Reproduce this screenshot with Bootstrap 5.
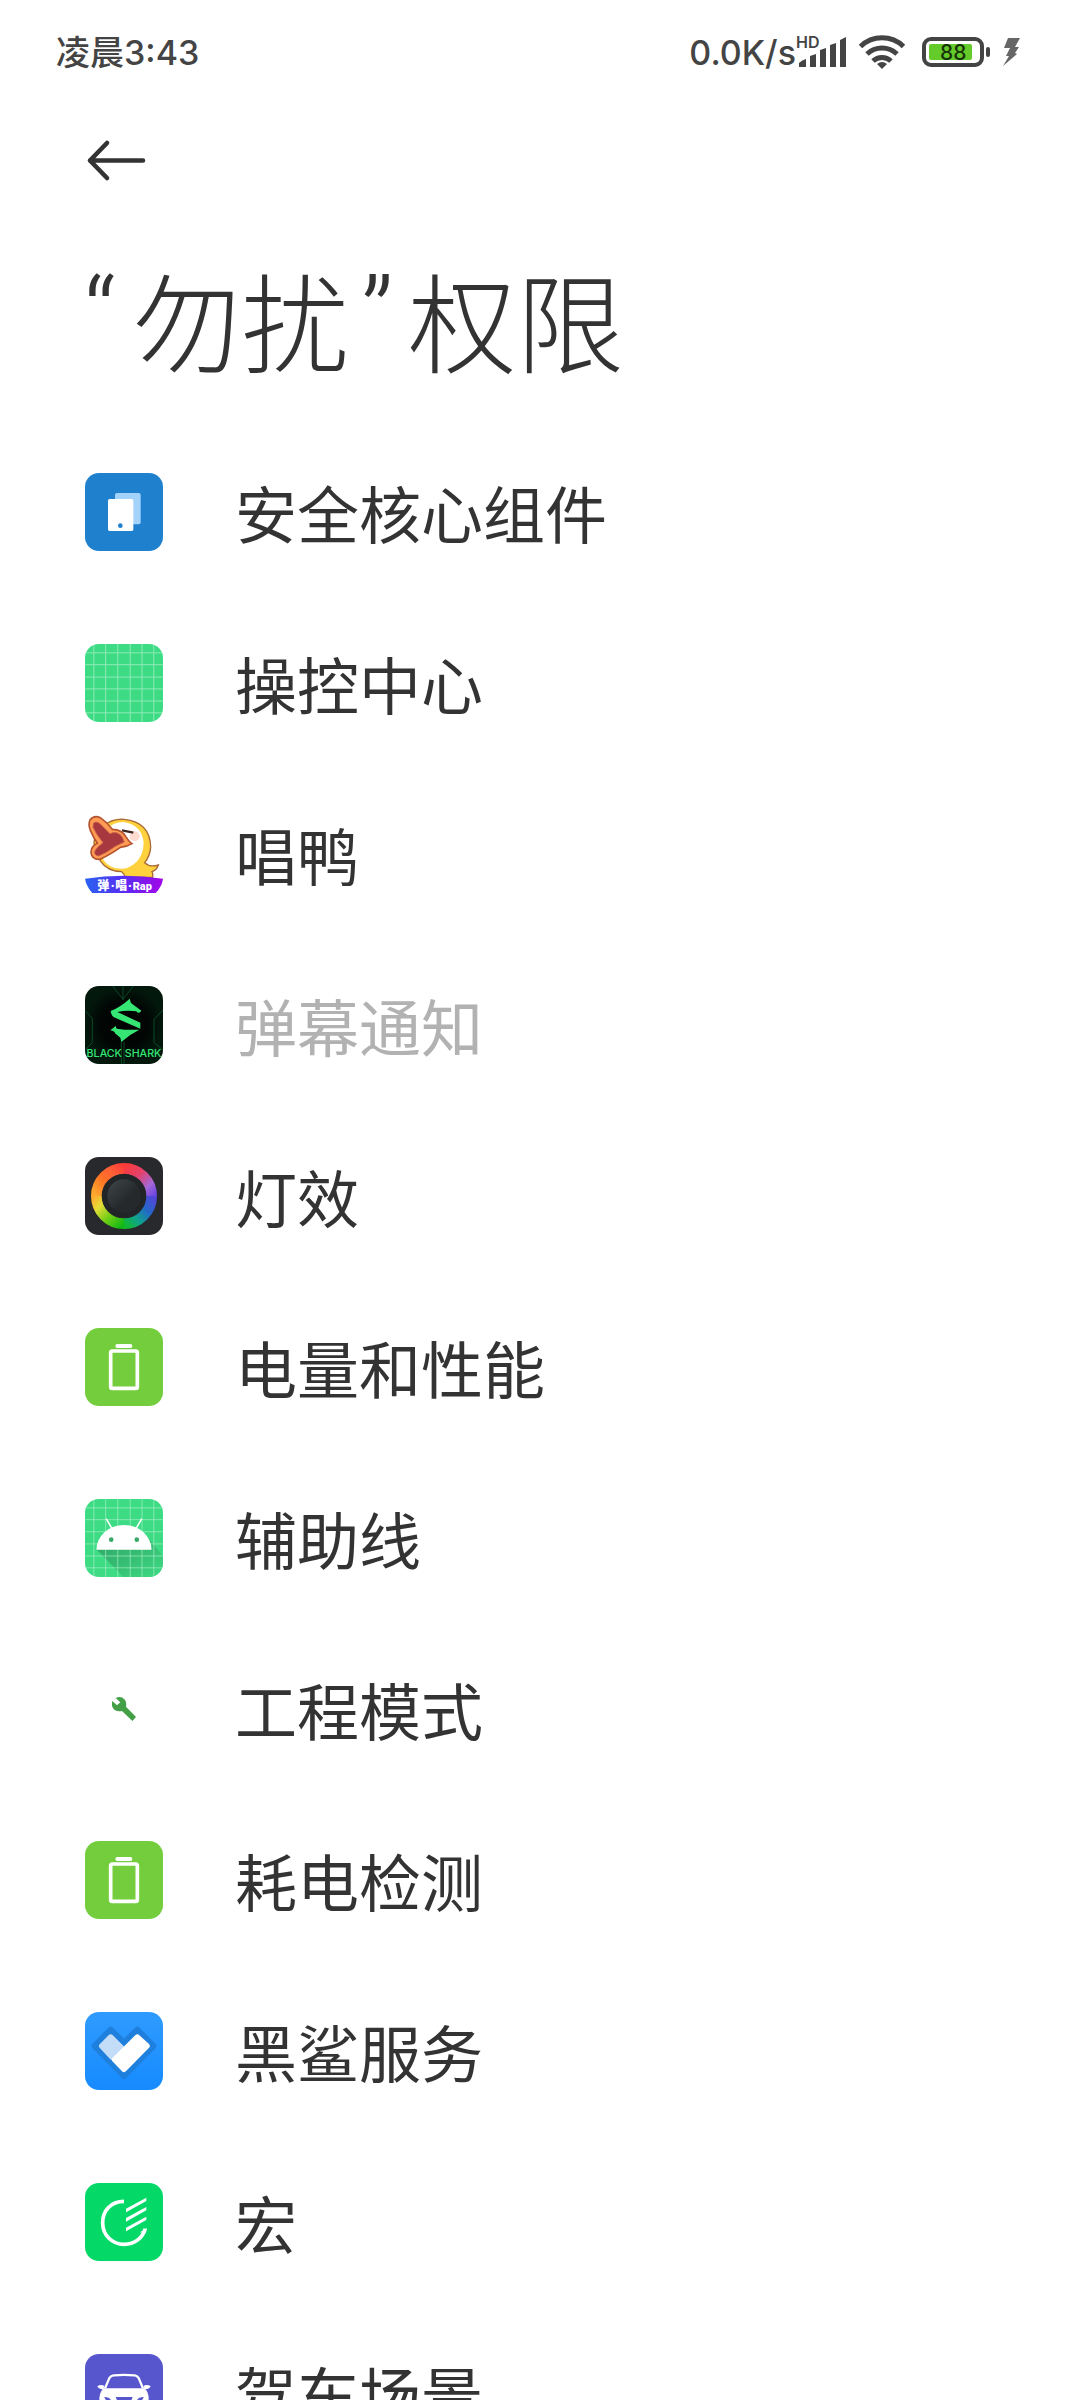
<!DOCTYPE html>
<html lang="zh-CN">
<head>
<meta charset="utf-8">
<meta name="viewport" content="width=device-width, initial-scale=1">
<title>“勿扰”权限</title>
<link href="https://cdn.jsdelivr.net/npm/bootstrap@5.3.0/dist/css/bootstrap.min.css" rel="stylesheet">
<style>
  body { background: #fff; color: #333; font-family: "Noto Sans CJK SC", sans-serif; }
  .screen { height: 100vh; }
  .status-bar { height: 104px; padding: 2px 58px 0 56px; color: #444; font-family: Inter, "Noto Sans CJK SC", sans-serif; font-size: 34px; line-height: 40px; font-weight: 500; }
  .status-bar svg { overflow: visible; margin-bottom: 2px; }
  .back-row { height: 112px; padding: 0 80px; }
  .back-btn { color: #333; }
  .page-title { height: 210px; padding: 0 80px; font-size: 108px; line-height: 204px; font-weight: 300; }
  .quote-mark { font-family: Roboto, sans-serif; font-weight: 300; }
  .quote-open { width: 53px; padding-left: 4px; }
  .quote-close { width: 59px; padding-left: 12px; }
  .app-item { height: 171px; padding: 0 85px; gap: 72px; color: #333; font-size: 62px; line-height: 80px; background: transparent; }
  .app-item.disabled { color: #b2b2b2; background: transparent; }
  .app-icon { width: 78px; height: 78px; border-radius: 14px; }
</style>
</head>
<body>
<div class="screen d-flex flex-column overflow-hidden">
  <header class="flex-shrink-0">
    <div class="status-bar d-flex align-items-center justify-content-between">
      <div>凌晨3:43</div>
      <div class="d-flex align-items-center">
        <span>0.0K/s</span>
        <svg width="54" height="36" viewBox="0 0 54 36" fill="#444" role="img" aria-label="信号">
          <text x="0" y="14" font-family="Inter" font-size="16" font-weight="600">HD</text>
          <path d="M3 33v-4q3-3 7-4v8zM14 33V22l6-2v13zM24 33V16l6-2v19zM34 33V11l6-2v24zM44 33V6l6-3v30z"/>
        </svg>
        <svg class="ms-2" width="48" height="36" viewBox="0 0 48 36" fill="none" stroke="#444" stroke-width="5" role="img" aria-label="Wi-Fi">
          <path d="M2.500 12.500a31 31 0 0 1 43 0M9 20a22 22 0 0 1 30 0M15 27a13 13 0 0 1 18 0"/>
          <path d="M24 35l-5-5q5-4 10 0z" fill="#444" stroke="none"/>
        </svg>
        <svg class="ms-3" width="70" height="36" viewBox="0 0 70 36" role="img" aria-label="电量">
          <rect x="2" y="5" width="58" height="26" rx="7" fill="none" stroke="#444" stroke-width="4"/>
          <rect x="7" y="10" width="43" height="16" rx="2" fill="#65cb2b"/>
          <rect x="64" y="13" width="4" height="10" rx="2" fill="#444"/>
          <text x="18" y="26" font-family="Inter" font-size="21" font-weight="500" fill="#17330a">88</text>
        </svg>
        <svg class="ms-2" width="22" height="36" viewBox="0 0 22 36" role="img" aria-label="充电中">
          <path d="M8 4L4 14H10L6 22H9L3 32L17 20L15 19L19 13H15L20 4Z" fill="#666"/>
        </svg>
      </div>
    </div>
    <nav class="back-row d-flex align-items-center">
      <button type="button" class="back-btn btn border-0 p-0 lh-1" aria-label="返回">
        <svg width="70" height="48" viewBox="0 0 70 48" fill="none" stroke="currentColor" stroke-width="4.600" stroke-linecap="round" stroke-linejoin="round"><path d="M27 7L10 24.500L27 42M10 24.500H63"/></svg>
      </button>
    </nav>
    <h1 class="page-title mb-0 d-flex"><span class="quote-mark quote-open">“</span>勿扰<span class="quote-mark quote-close">”</span>权限</h1>
  </header>

  <main class="list-group list-group-flush overflow-hidden">
    <a href="#" class="app-item list-group-item border-0 d-flex align-items-center flex-shrink-0">
      <svg class="app-icon flex-shrink-0" viewBox="45 39 234 234" aria-hidden="true">
        <path fill="#1f80cd" d="M45 39h234v234H45z"/><rect x="135" y="99" width="77" height="94" rx="6" fill="#a3d3fb"/><rect x="114" y="117" width="76" height="96" rx="5" fill="#fff"/><circle cx="151" cy="197" r="7" fill="#1f80cd"/>
      </svg>安全核心组件</a>
    <a href="#" class="app-item list-group-item border-0 d-flex align-items-center flex-shrink-0">
      <svg class="app-icon flex-shrink-0" viewBox="43 550 238 238" aria-hidden="true">
        <path fill="#3ddc84" d="M43 550h238v238H43z"/><path d="M70 550v238M106 550v238M143 550v238M181 550v238M217 550v238M253 550v238M43 577h238M43 613h238M43 651h238M43 687h238M43 724h238M43 760h238" stroke="#8feab8" stroke-width="3"/>
      </svg>操控中心</a>
    <a href="#" class="app-item list-group-item border-0 d-flex align-items-center flex-shrink-0">
      <svg class="app-icon rounded-0 flex-shrink-0" viewBox="45 45 234 234" aria-hidden="true">
        <defs><linearGradient id="banner"><stop offset="0" stop-color="#2862f2"/><stop offset=".5" stop-color="#5a2cf2"/><stop offset="1" stop-color="#a307e8"/></linearGradient></defs>
        <path d="M104 76Q126 56 162 58Q241 66 242 142Q240 168 224 188Q240 203 265 195Q260 210 246 215Q250 222 248 232H165Q164 222 155 215Q112 214 92 184L75 140Q68 125 78 110Z" fill="#ffd23d" stroke="#a96a35" stroke-width="4"/>
        <path d="M112 86Q130 66 160 66Q218 76 221 130Q219 185 170 205Q124 212 100 180Z" fill="#fff"/>
        <circle cx="194" cy="109" r="15" fill="#ffdbd1"/>
        <path d="M156 91L190 98" stroke="#402821" stroke-width="7"/>
        <path d="M60 60Q72 44 91 53Q112 68 127 88Q156 89 167 109Q178 126 186 131Q170 141 151 142Q128 159 90 178Q66 180 63 158Q63 139 82 130Q70 112 61 91Q54 74 60 60Z" fill="#ff9c55" stroke="#b5532e" stroke-width="5"/>
        <path d="M70 70Q80 60 94 75L120 101Q142 91 156 110L163 126L136 139Q108 160 86 168Q70 166 75 152Q82 140 99 128Q78 102 69 82Z" fill="#a8383f" stroke="#cf6547" stroke-width="3"/>
        <path d="M45 236Q160 219 279 236Q276 259 257 279H67Q49 259 45 236Z" fill="url(#banner)"/>
        <text y="270" font-family="Roboto, Noto Sans CJK SC" font-size="36" font-weight="900" fill="#fff"><tspan x="82">弹</tspan><tspan x="122">·</tspan><tspan x="136">唱</tspan><tspan x="174">·</tspan><tspan x="188" font-size="33">Rap</tspan></text>
      </svg>唱鸭</a>
    <a href="#" class="app-item disabled list-group-item border-0 d-flex align-items-center flex-shrink-0" aria-disabled="true" tabindex="-1">
      <svg class="app-icon flex-shrink-0" viewBox="45 48 234 234" aria-hidden="true">
        <defs><radialGradient id="dark"><stop offset="0" stop-color="#000"/><stop offset=".6" stop-color="#010604"/><stop offset="1" stop-color="#03180d"/></radialGradient></defs>
        <path fill="url(#dark)" d="M45 48h234v234H45z"/>
        <path d="M45 122L67 145V218L45 240M279 120L252 148V218L279 240M128 48L159 88L190 48M159 48V90M154 215V282M162 215V282" fill="none" stroke="#0b4a27" stroke-width="3"/>
        <path d="M122 123Q152 111 179 86L183 99L214 122Q206 134 199 124Q170 119 142 126L211 158V176L137 144Q123 139 122 123ZM121 181L138 167Q136 174 141 176Q171 181 208 179Q179 193 154 216L151 203L135 190Q135 184 121 181Z" fill="#35e675"/>
        <text x="162" y="261" text-anchor="middle" font-family="Inter" font-size="32" font-weight="500" fill="#35e675">BLACK SHARK</text>
      </svg>弹幕通知</a>
    <a href="#" class="app-item list-group-item border-0 d-flex align-items-center flex-shrink-0">
      <svg class="app-icon flex-shrink-0" viewBox="45 561 234 234" aria-hidden="true">
        <defs><linearGradient id="knob" x2="1" y2="1"><stop offset="0" stop-color="#40474a"/><stop offset=".6" stop-color="#25292b"/></linearGradient>
        <linearGradient id="g1" gradientUnits="userSpaceOnUse" x1="162" y1="590" x2="249" y2="678"><stop offset="0" stop-color="#fa3b38"/><stop offset=".4" stop-color="#e3426d"/><stop offset=".75" stop-color="#a568d8"/><stop offset="1" stop-color="#7048df"/></linearGradient>
        <linearGradient id="g2" gradientUnits="userSpaceOnUse" x1="249" y1="678" x2="162" y2="762"><stop offset="0" stop-color="#5545dc"/><stop offset=".35" stop-color="#2467c8"/><stop offset=".7" stop-color="#10a48a"/><stop offset="1" stop-color="#12b82e"/></linearGradient>
        <linearGradient id="g3" gradientUnits="userSpaceOnUse" x1="162" y1="762" x2="78" y2="678"><stop offset="0" stop-color="#10b815"/><stop offset=".4" stop-color="#72ce16"/><stop offset=".75" stop-color="#e4dc37"/><stop offset="1" stop-color="#fbb02e"/></linearGradient>
        <linearGradient id="g4" gradientUnits="userSpaceOnUse" x1="78" y1="678" x2="162" y2="590"><stop offset="0" stop-color="#fbaa2e"/><stop offset=".4" stop-color="#ff7324"/><stop offset=".7" stop-color="#ff6037"/><stop offset="1" stop-color="#fa3b38"/></linearGradient></defs>
        <path fill="#28292d" d="M45 561h234v234H45z"/>
        <g fill="none" stroke-width="32"><path d="M161 595A83 83 0 0 1 245 679" stroke="url(#g1)"/><path d="M245 678A83 83 0 0 1 161 761" stroke="url(#g2)"/><path d="M162 761A83 83 0 0 1 79 677" stroke="url(#g3)"/><path d="M79 678A83 83 0 0 1 162 595" stroke="url(#g4)"/></g>
        <circle cx="162" cy="678" r="66" fill="#222527"/><circle cx="162" cy="678" r="50" fill="url(#knob)"/>
      </svg>灯效</a>
    <a href="#" class="app-item list-group-item border-0 d-flex align-items-center flex-shrink-0">
      <svg class="app-icon flex-shrink-0" viewBox="45 54 234 234" aria-hidden="true">
        <g id="cell"><path fill="#74cd3d" d="M45 54h234v234H45z"/><rect x="136" y="102" width="51" height="12" rx="6" fill="#fff"/><rect x="122" y="123" width="80" height="112" rx="5" fill="none" stroke="#fff" stroke-width="11"/></g>
      </svg>电量和性能</a>
    <a href="#" class="app-item list-group-item border-0 d-flex align-items-center flex-shrink-0">
      <svg class="app-icon flex-shrink-0" viewBox="43 565 238 238" aria-hidden="true">
        <defs><linearGradient id="shade" x2="1" y2="1"><stop offset="0" stop-color="#2fa566"/><stop offset=".5" stop-color="#36bb72"/><stop offset="1" stop-color="#3ddc84"/></linearGradient></defs>
        <path fill="#3ddc84" d="M43 565h238v238H43z"/><path d="M79 720L160 803H281V740L229 675Z" fill="url(#shade)"/>
        <path d="M70 565v238M106 565v238M143 565v238M181 565v238M217 565v238M253 565v238M43 592h238M43 628h238M43 665h238M43 702h238M43 739h238M43 775h238" stroke="#a5efc6" stroke-opacity=".7" stroke-width="3"/>
        <path d="M78 720A84 76 0 0 1 246 720Z" fill="#fff"/><path d="M109 627L124 653M215 627L200 653" stroke="#fff" stroke-width="5" stroke-linecap="round"/><circle cx="123" cy="689" r="7" fill="#36a967"/><circle cx="201" cy="689" r="7" fill="#36a967"/>
      </svg>辅助线</a>
    <a href="#" class="app-item list-group-item border-0 d-flex align-items-center flex-shrink-0">
      <svg class="app-icon flex-shrink-0" viewBox="45 30 234 234" aria-hidden="true">
        <path d="M137 114Q153 107 163 118Q171 127 168 140L198 171L187 183L156 153Q144 156 133 149Q122 138 127 123L141 136L151 127Z" fill="#43a047"/>
      </svg>工程模式</a>
    <a href="#" class="app-item list-group-item border-0 d-flex align-items-center flex-shrink-0">
      <svg class="app-icon flex-shrink-0" viewBox="45 54 234 234" aria-hidden="true"><use href="#cell"/></svg>耗电检测</a>
    <a href="#" class="app-item list-group-item border-0 d-flex align-items-center flex-shrink-0">
      <svg class="app-icon flex-shrink-0" viewBox="45 36 234 234" aria-hidden="true">
        <defs><linearGradient id="sky" x2="0" y2="1"><stop offset="0" stop-color="#2f9bff"/><stop offset="1" stop-color="#168bff"/></linearGradient></defs>
        <path fill="url(#sky)" d="M45 36h234v234H45z"/>
        <path d="M122 90L162 130L202 90L249 138L162 227L75 138Z" fill="#1f7fdd" stroke="#1f7fdd" stroke-width="20" stroke-linejoin="round"/>
        <path d="M122 112L153 143L128 172L96 138Z" fill="#c3dcf7" stroke="#c3dcf7" stroke-width="18" stroke-linejoin="round"/>
        <path d="M202 112L230 138L162 207L135 179Z" fill="#fff" stroke="#fff" stroke-width="18" stroke-linejoin="round"/>
      </svg>黑鲨服务</a>
    <a href="#" class="app-item list-group-item border-0 d-flex align-items-center flex-shrink-0">
      <svg class="app-icon flex-shrink-0" viewBox="45 39 234 234" aria-hidden="true">
        <path fill="#04d967" d="M45 39h234v234H45z"/><path d="M162 94C121 94 98 124 98 158C98 196 127 223 162 223C195 223 218 203 226 176" fill="none" stroke="#fff" stroke-width="11"/><path d="M168 116L229 83V93L168 127ZM168 144L229 111V121L168 155ZM168 173L229 140V150L168 184ZM210 187L231 173L223 190Z" fill="#fff"/>
      </svg>宏</a>
    <a href="#" class="app-item list-group-item border-0 d-flex align-items-center flex-shrink-0">
      <svg class="app-icon flex-shrink-0" viewBox="45 552 234 234" aria-hidden="true">
        <path fill="#5856cd" d="M45 552h234v234H45z"/><path d="M105 655L116 629Q120 617 132 616Q162 613 193 616Q204 617 208 629L219 655" fill="none" stroke="#fff" stroke-width="7"/><path d="M82 649Q90 642 103 647L101 655H223L221 647Q233 642 242 649Q239 657 226 658Q237 669 236 690V735H214V720H110V735H88V690Q88 669 98 658Q85 657 82 649Z" fill="#fff"/><path d="M103 681Q118 681 123 690V696Q106 694 103 681ZM221 681Q206 681 201 690V696Q218 694 221 681ZM137 681H188L182 696H143Z" fill="#5856cd"/>
      </svg>驾车场景</a>
  </main>
</div>
<script src="https://cdn.jsdelivr.net/npm/bootstrap@5.3.0/dist/js/bootstrap.bundle.min.js"></script>
</body>
</html>
